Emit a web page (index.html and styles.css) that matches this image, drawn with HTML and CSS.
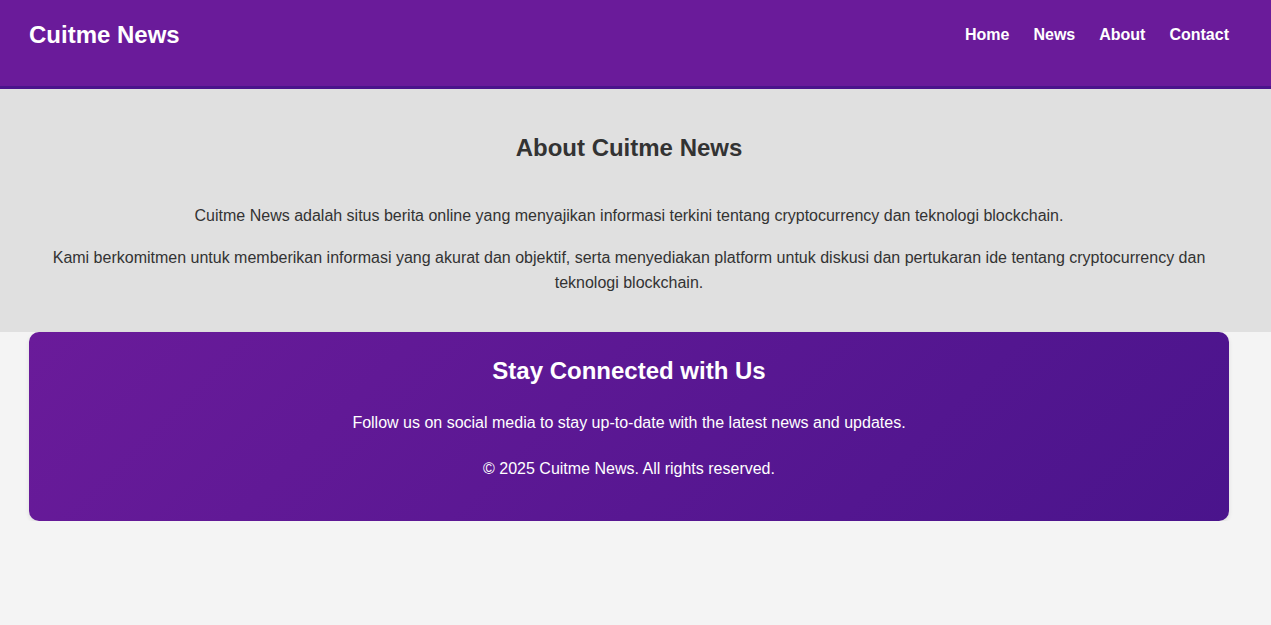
FILE: index.html
```html
<!DOCTYPE html>
<html lang="id">
<head>
<meta charset="utf-8">
<title>Cuitme News</title>
<link rel="stylesheet" href="styles.css">
</head>
<body>
<header class="site-header">
  <div class="header-inner">
    <div class="logo">Cuitme News</div>
    <nav class="nav">
      <a href="#">Home</a>
      <a href="#">News</a>
      <a href="#">About</a>
      <a href="#">Contact</a>
    </nav>
  </div>
</header>
<section class="about">
  <h2 class="about-title">About Cuitme News</h2>
  <p>Cuitme News adalah situs berita online yang menyajikan informasi terkini tentang cryptocurrency dan teknologi blockchain.</p>
  <p>Kami berkomitmen untuk memberikan informasi yang akurat dan objektif, serta menyediakan platform untuk diskusi dan pertukaran ide tentang cryptocurrency dan teknologi blockchain.</p>
</section>
<div class="footer-wrap">
  <footer class="footer">
    <h2 class="footer-title">Stay Connected with Us</h2>
    <p class="footer-text">Follow us on social media to stay up-to-date with the latest news and updates.</p>
    <p class="footer-copy">&copy; 2025 Cuitme News. All rights reserved.</p>
  </footer>
</div>
</body>
</html>
```
FILE: styles.css
```css
* { box-sizing: border-box; }
html, body { margin: 0; padding: 0; }
body {
  font-family: "Liberation Sans", Arial, sans-serif;
  background: #f4f4f4;
  color: #333;
  line-height: 1.6;
}
.site-header {
  background: #6a1b9a;
  border-bottom: 3px solid #4a148c;
  height: 89px;
}
.header-inner {
  width: 1200px;
  margin-left: 29px;
  display: flex;
  justify-content: space-between;
  align-items: center;
  height: 70px;
}
.logo {
  color: #fff;
  font-weight: bold;
  font-size: 24px;
}
.nav {
  display: flex;
  gap: 24px;
}
.nav a {
  color: #fff;
  text-decoration: none;
  font-weight: bold;
  font-size: 16px;
}
.about {
  background: #e0e0e0;
  padding: 40px 53px 21px 40px;
  text-align: center;
}
.about-title {
  margin: 0 0 36px;
  font-size: 24px;
  line-height: 38px;
  color: #333;
}
.about p {
  margin: 0 0 17px;
  font-size: 16px;
  line-height: 25px;
}
.about p:last-child { margin-bottom: 16px; }
.footer-wrap {
  padding-left: 29px;
}
.footer {
  width: 1200px;
  background: linear-gradient(135deg, #6a1b9a, #4a148c);
  border-radius: 10px;
  color: #fff;
  text-align: center;
  padding: 20px 20px 40px;
  box-shadow: 0 2px 4px rgba(0,0,0,0.1);
}
.footer-title {
  margin: 0 0 20px;
  font-size: 24px;
  line-height: 38px;
}
.footer-text, .footer-copy {
  margin: 0;
  font-size: 16px;
  line-height: 25px;
}
.footer-text { margin-bottom: 21px; }
```
